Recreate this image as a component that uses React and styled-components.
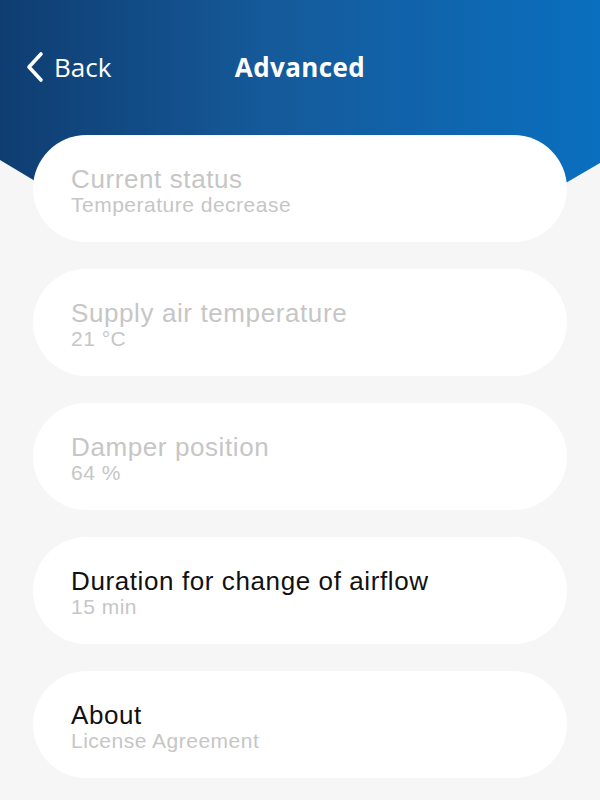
import React from 'react'
import styled, { createGlobalStyle } from 'styled-components'

const Global = createGlobalStyle`
    html, body {
        margin: 0;
        padding: 0;
        background: #f6f6f6;
    }
    body {
        font-family: "Liberation Sans", Arial, sans-serif;
    }
`

const Pantalla = styled.div`
    position: relative;
    width: 600px;
    height: 800px;
    overflow: hidden;
    background: #f6f6f6;
`

const Fondo = styled.div`
    position: absolute;
    top: 0;
    left: 0;
    width: 600px;
    height: 250px;
    background: linear-gradient(90deg, #0f3d71 0%, #155a9a 45%, #0a6fbf 100%);
    clip-path: polygon(0 0, 100% 0, 100% 163px, 540px 198px, 300px 236px, 60px 196px, 0 160px);
`

const Cabecera = styled.header`
    position: relative;
    height: 135px;
    display: flex;
    align-items: flex-start;
    justify-content: center;
    padding-top: 48px;
    box-sizing: border-box;
`

const Volver = styled.div`
    position: absolute;
    left: 24px;
    top: 51px;
    display: flex;
    align-items: center;
    gap: 8px;
    color: #fff;
    font-family: "Open Sans", Lato, sans-serif;
    font-size: 26px;
    line-height: 32px;
`

const Titulo = styled.h1`
    margin: 0;
    color: #fff;
    font-family: "Open Sans", Lato, sans-serif;
    font-weight: 700;
    font-size: 26px;
    line-height: 38px;
    letter-spacing: 0.4px;
`

const Lista = styled.div`
    position: relative;
    display: flex;
    flex-direction: column;
    gap: 27px;
    padding: 0 33px;
`

const Tarjeta = styled.div`
    height: 107px;
    background: #fff;
    border-radius: 54px;
    display: flex;
    flex-direction: column;
    justify-content: center;
    padding: 5px 38px 0;
    box-sizing: border-box;
`

const Etiqueta = styled.div`
    font-size: 26px;
    line-height: 28px;
    letter-spacing: 0.6px;
    color: ${p => (p.$disabled ? '#c6c6c6' : '#111111')};
`

const Valor = styled.div`
    font-size: 21px;
    line-height: 24px;
    letter-spacing: 0.5px;
    color: #c6c6c6;
`

const items = [
    { t: 'Current status', v: 'Temperature decrease', d: true },
    { t: 'Supply air temperature', v: '21 °C', d: true },
    { t: 'Damper position', v: '64 %', d: true },
    { t: 'Duration for change of airflow', v: '15 min', d: false },
    { t: 'About', v: 'License Agreement', d: false },
]

const App = () => {
    return (
        <Pantalla>
            <Global />
            <Fondo />
            <Cabecera>
                <Volver>
                    <svg width="22" height="32" viewBox="0 0 22 32">
                        <path d="M17 3 L5 16 L17 29" fill="none" stroke="#fff" strokeWidth="3.6" strokeLinecap="round" strokeLinejoin="round" />
                    </svg>
                    <span>Back</span>
                </Volver>
                <Titulo>Advanced</Titulo>
            </Cabecera>
            <Lista>
                {items.map(it => (
                    <Tarjeta key={it.t}>
                        <Etiqueta $disabled={it.d}>{it.t}</Etiqueta>
                        <Valor>{it.v}</Valor>
                    </Tarjeta>
                ))}
            </Lista>
        </Pantalla>
    )
}

export default App
